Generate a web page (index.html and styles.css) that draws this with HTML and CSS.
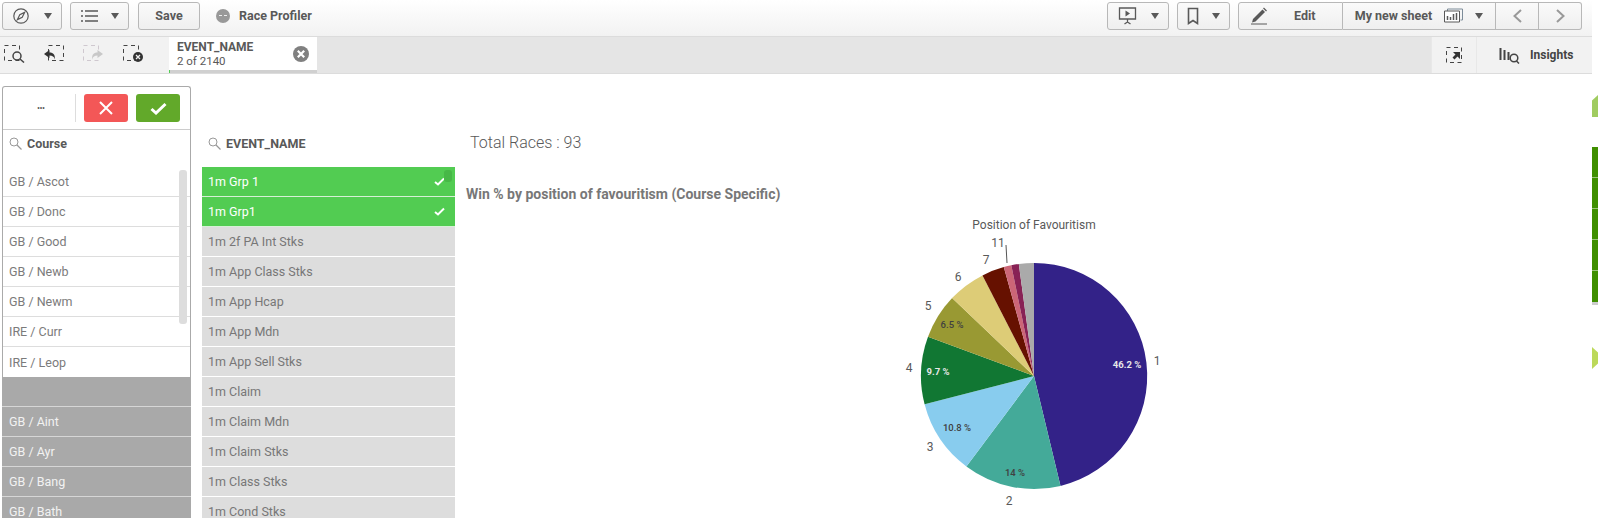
FILE: index.html
```html
<!DOCTYPE html>
<html lang="en">
<head>
    <meta charset="UTF-8">
    <title>Race Profiler</title>
    <link rel="stylesheet" href="styles.css">
</head>
<body>
<div class="app">
    <div class="main">
        <div class="toolbar">
            <button class="btn btn-menu">
                <svg width="18" height="18" viewBox="0 0 18 18"><circle cx="9" cy="9" r="7.2" fill="none" stroke="#595959" stroke-width="1.2"/><path d="M12.6 5.4 10.2 10.2 5.4 12.6 7.8 7.8z" fill="none" stroke="#595959" stroke-width="1.2"/></svg>
                <span class="caret"></span>
            </button>
            <button class="btn btn-menu btn-list">
                <svg width="18" height="14" viewBox="0 0 18 14"><path d="M4 2h13M4 7h13M4 12h13" stroke="#595959" stroke-width="1.5"/><path d="M0 2h2M0 7h2M0 12h2" stroke="#595959" stroke-width="1.5"/></svg>
                <span class="caret"></span>
            </button>
            <button class="btn btn-save">Save</button>
            <span class="app-icon"></span>
            <span class="app-name">Race Profiler</span>

            <div class="toolbar-right">
                <button class="btn btn-menu btn-story">
                    <svg width="19" height="20" viewBox="0 0 19 20"><path d="M1.5 2h16v11h-16z" fill="none" stroke="#595959" stroke-width="1.3"/><path d="M7.5 4.5 12 7.5 7.5 10.5z" fill="#595959"/><path d="M9.5 13v3M6.5 18l3-2 3 2" fill="none" stroke="#595959" stroke-width="1.3"/></svg>
                    <span class="caret"></span>
                </button>
                <button class="btn btn-menu btn-bookmark">
                    <svg width="12" height="18" viewBox="0 0 12 18"><path d="M1.5 1.500h9v15l-4.500-3-4.500 3z" fill="none" stroke="#595959" stroke-width="1.600"/></svg>
                    <span class="caret"></span>
                </button>
                <div class="btn-group">
                    <button class="btn btn-edit">
                        <svg width="18" height="18" viewBox="0 0 18 18"><path d="M3 12 12.500 2.500l2.500 2.500L5.500 14.500 2 15.500z" fill="#595959"/><path d="M13.500 1l3 3" stroke="#595959" stroke-width="1.300"/><path d="M1 17h16" stroke="#595959"/></svg>
                        <span>Edit</span>
                    </button>
                    <button class="btn btn-sheet">
                        <span>My new sheet</span>
                        <svg width="19" height="15" viewBox="0 0 19 15"><path d="M3.500 3V1h15v11h-2" fill="none" stroke="#7d8c99"/><path d="M.5 3h15v11H.500z" fill="#fff" stroke="#595959"/><path d="M3.500 8v4M6.500 9v3M9.500 6v6M12.500 5v7" stroke="#595959" stroke-width="1.500"/></svg>
                        <span class="caret"></span>
                    </button>
                    <button class="btn btn-nav">
                        <svg width="11" height="14" viewBox="0 0 11 14"><path d="M9 1 2.500 7 9 13" fill="none" stroke="#999" stroke-width="2"/></svg>
                    </button>
                    <button class="btn btn-nav">
                        <svg width="11" height="14" viewBox="0 0 11 14"><path d="M2 1l6.500 6L2 13" fill="none" stroke="#999" stroke-width="2"/></svg>
                    </button>
                </div>
            </div>
        </div>

        <div class="selbar">
            <div class="sel-tools">
                <svg width="21" height="18" viewBox="0 0 21 18"><rect x=".5" y=".5" width="15" height="15" fill="none" stroke="#444" stroke-dasharray="4 3.500"/><circle cx="13" cy="11" r="4" fill="#f2f2f2" stroke="#444" stroke-width="1.500"/><path d="M16 14l4 3.500" stroke="#444" stroke-width="1.500"/></svg>
                <svg width="21" height="18" viewBox="0 0 21 18"><rect x="4.500" y=".5" width="15" height="15" fill="none" stroke="#444" stroke-dasharray="4 3.500"/><path d="M0 9l5.500-4v2.500c4 0 5.500 2 5.500 7-1-3-2.500-4-5.500-4v2.500z" fill="#333"/></svg>
                <svg width="21" height="18" viewBox="0 0 21 18"><rect x=".5" y=".5" width="15" height="15" fill="none" stroke="#cfc8cf" stroke-dasharray="4 3.500"/><path d="M20 9l-5.500-4v2.500c-4 0-5.500 2-5.500 7 1-3 2.500-4 5.500-4v2.500z" fill="#c8c8c8"/></svg>
                <svg width="21" height="18" viewBox="0 0 21 18"><rect x=".5" y=".5" width="15" height="15" fill="none" stroke="#444" stroke-dasharray="4 3.500"/><circle cx="15" cy="12" r="5" fill="#333"/><path d="M13 10l4 4M17 10l-4 4" stroke="#f2f2f2" stroke-width="1.300"/></svg>
            </div>
            <div class="chip">
                <div class="chip-body">
                    <div class="chip-text">
                        <div class="chip-field">EVENT_NAME</div>
                        <div class="chip-count">2 of 2140</div>
                    </div>
                    <svg width="16" height="16" viewBox="0 0 16 16"><circle cx="8" cy="8" r="8" fill="#808080"/><path d="M4.800 4.800l6.400 6.400M11.200 4.800l-6.400 6.400" stroke="#fff" stroke-width="2.200"/></svg>
                </div>
                <div class="chip-strip"><span class="chip-strip-on"></span></div>
            </div>
            <div class="sel-fill"></div>
            <div class="sel-side sel-select">
                <svg width="17" height="17" viewBox="0 0 17 17"><rect x=".5" y=".5" width="15" height="15" fill="none" stroke="#444" stroke-dasharray="4 3.500"/><path d="M7 5h7v7l-2.500-2.500-3 3-2-2 3-3z" fill="#333"/></svg>
            </div>
            <div class="sel-side sel-insights">
                <svg width="21" height="17" viewBox="0 0 21 17"><path d="M1.500 1v12M5.500 3v10M9.500 5v8" stroke="#444" stroke-width="2"/><circle cx="15" cy="11" r="3.800" fill="none" stroke="#444" stroke-width="1.500"/><path d="M17.500 14l2.500 2.500" stroke="#444" stroke-width="1.500"/></svg>
                <span>Insights</span>
            </div>
        </div>

        <div class="sheet">
            <div class="course-col">
                <div class="course-panel">
                    <div class="confirm-bar">
                        <span class="more">•••</span>
                        <span class="confirm-sep"></span>
                        <span class="confirm confirm-no">
                            <svg width="14" height="14" viewBox="0 0 14 14"><path d="M1 1l12 12M13 1 1 13" stroke="#fff" stroke-width="2"/></svg>
                        </span>
                        <span class="confirm confirm-yes">
                            <svg width="17" height="13" viewBox="0 0 17 13"><path d="M1.500 7l4.500 4L15.500 2" fill="none" stroke="#fff" stroke-width="3"/></svg>
                        </span>
                    </div>
                    <div class="list-head">
                        <svg class="search" width="13" height="13" viewBox="0 0 13 13"><circle cx="5" cy="5" r="4" fill="none" stroke="#999"/><path d="M8 8l4.500 4.500" stroke="#999" stroke-width="1.300"/></svg>
                        <span>Course</span>
                    </div>
                    <div class="course-white">
                        <div class="row">GB / Ascot</div>
                        <div class="row">GB / Donc</div>
                        <div class="row">GB / Good</div>
                        <div class="row">GB / Newb</div>
                        <div class="row">GB / Newm</div>
                        <div class="row">IRE / Curr</div>
                        <div class="row row-last">IRE / Leop</div>
                        <span class="scrollbar"></span>
                    </div>
                </div>
                <div class="row row-dark"></div>
                <div class="row row-dark">GB / Aint</div>
                <div class="row row-dark">GB / Ayr</div>
                <div class="row row-dark">GB / Bang</div>
                <div class="row row-dark">GB / Bath</div>
            </div>

            <div class="event-col">
                <div class="list-head">
                    <svg class="search" width="13" height="13" viewBox="0 0 13 13"><circle cx="5" cy="5" r="4" fill="none" stroke="#999"/><path d="M8 8l4.500 4.500" stroke="#999" stroke-width="1.300"/></svg>
                    <span>EVENT_NAME</span>
                </div>
                <div class="event-list">
                    <div class="row row-on">1m Grp 1
                        <svg width="11" height="9" viewBox="0 0 11 9"><path d="M1 5l3 2.500L10 1.500" fill="none" stroke="#fff" stroke-width="2"/></svg>
                    </div>
                    <div class="row row-on">1m Grp1
                        <svg width="11" height="9" viewBox="0 0 11 9"><path d="M1 5l3 2.500L10 1.500" fill="none" stroke="#fff" stroke-width="2"/></svg>
                    </div>
                    <div class="row row-alt">1m 2f PA Int Stks</div>
                    <div class="row row-alt">1m App Class Stks</div>
                    <div class="row row-alt">1m App Hcap</div>
                    <div class="row row-alt">1m App Mdn</div>
                    <div class="row row-alt">1m App Sell Stks</div>
                    <div class="row row-alt">1m Claim</div>
                    <div class="row row-alt">1m Claim Mdn</div>
                    <div class="row row-alt">1m Claim Stks</div>
                    <div class="row row-alt">1m Class Stks</div>
                    <div class="row row-alt">1m Cond Stks</div>
                    <span class="scrollbar scrollbar-on"></span>
                </div>
            </div>

            <div class="chart-col">
                <div class="kpi">Total Races : 93</div>
                <h2 class="chart-title">Win % by position of favouritism (Course Specific)</h2>
                <svg class="pie" width="300" height="300" viewBox="-144 -168 300 300">
                    <text class="pie-head" x="0" y="-147">Position of Favouritism</text>
                    <g transform="translate(0 0)">
                        <path d="M0 0V-113A113 113 0 0 1 26.500 109.900Z" fill="#332288"/>
                        <path d="M0 0L26.500 109.900A113 113 0 0 1 -67.600 90.500Z" fill="#44aa99"/>
                        <path d="M0 0L-67.600 90.500A113 113 0 0 1 -109.400 28.300Z" fill="#88ccee"/>
                        <path d="M0 0L-109.400 28.300A113 113 0 0 1 -106 -39.200Z" fill="#117733"/>
                        <path d="M0 0L-106 -39.200A113 113 0 0 1 -81.900 -77.900Z" fill="#999933"/>
                        <path d="M0 0L-81.900 -77.900A113 113 0 0 1 -51.500 -100.600Z" fill="#ddcc77"/>
                        <path d="M0 0L-51.500 -100.600A113 113 0 0 1 -30.200 -108.900Z" fill="#661100"/>
                        <path d="M0 0L-30.200 -108.900A113 113 0 0 1 -22.700 -110.700Z" fill="#cc6677"/>
                        <path d="M0 0L-22.700 -110.700A113 113 0 0 1 -15.200 -112Z" fill="#882255"/>
                        <path d="M0 0L-15.200 -112A113 113 0 0 1 0 -113Z" fill="#aaaaaa"/>
                    </g>
                    <path d="M-28 -131 -27 -113" stroke="#555" fill="none"/>
                    <text class="pie-label" x="123" y="-11">1</text>
                    <text class="pie-label" x="-25" y="129">2</text>
                    <text class="pie-label" x="-104" y="75">3</text>
                    <text class="pie-label" x="-125" y="-4">4</text>
                    <text class="pie-label" x="-106" y="-66">5</text>
                    <text class="pie-label" x="-76" y="-95">6</text>
                    <text class="pie-label" x="-48" y="-112">7</text>
                    <text class="pie-label" x="-36" y="-129">11</text>
                    <text class="pie-val pie-val-light" x="93" y="-8">46.2 %</text>
                    <text class="pie-val" x="-19" y="100">14 %</text>
                    <text class="pie-val" x="-77" y="55">10.8 %</text>
                    <text class="pie-val pie-val-light" x="-96" y="-1">9.7 %</text>
                    <text class="pie-val" x="-82" y="-48">6.5 %</text>
                </svg>
            </div>
        </div>
    </div>

    <div class="edge">
        <span class="hex hex-a"></span>
        <div class="edge-bars">
            <span></span><span></span><span></span><span></span><span></span>
        </div>
        <span class="hex hex-b"></span>
    </div>
</div>
</body>
</html>
```

FILE: styles.css
```css
html, body {
    margin: 0;
    height: 518px;
    overflow: hidden;
    background: #fff;
}
body {
    font-family: "Roboto", "Liberation Sans", sans-serif;
    font-size: 12px;
    color: #595959;
}
.app {
    display: flex;
    height: 518px;
}
.main {
    width: 1592px;
    flex: none;
}

/* top toolbar */
.toolbar {
    display: flex;
    align-items: center;
    height: 37px;
    padding: 2px 10px 7px 2px;
    box-sizing: border-box;
    background: linear-gradient(#fff, #f2f2f2);
    border-bottom: 1px solid #dcdcdc;
}
.btn {
    display: flex;
    align-items: center;
    justify-content: center;
    height: 28px;
    padding: 0;
    box-sizing: border-box;
    font: 700 12.500px "Roboto", sans-serif;
    color: #595959;
    background: linear-gradient(#fafafa, #efefef);
    border: 1px solid #b8b8b8;
    border-radius: 3px;
}
.btn-menu {
    width: 60px;
    gap: 14px;
    margin-right: 8px;
}
.btn-list {
    width: 59px;
    gap: 12px;
    margin-right: 9px;
}
.btn-save {
    width: 62px;
}
.caret {
    width: 0;
    height: 0;
    border-left: 4.500px solid transparent;
    border-right: 4.500px solid transparent;
    border-top: 6px solid #595959;
}
.app-icon {
    position: relative;
    width: 14px;
    height: 14px;
    margin-left: 16px;
    border-radius: 50%;
    background: #999;
}
.app-icon::after {
    content: "";
    position: absolute;
    left: 3px;
    right: 3px;
    top: 6px;
    border-top: 1.500px dashed #eee;
}
.app-name {
    margin-left: 9px;
    font-weight: 700;
    font-size: 12.500px;
}
.toolbar-right {
    display: flex;
    margin-left: auto;
}
.btn-story {
    width: 62px;
}
.btn-bookmark {
    width: 53px;
    gap: 13px;
}
.btn-group {
    display: flex;
}
.btn-group .btn {
    border-radius: 0;
    border-left-width: 0;
}
.btn-group .btn:first-child {
    border-left-width: 1px;
    border-radius: 3px 0 0 3px;
}
.btn-group .btn:last-child {
    border-radius: 0 3px 3px 0;
}
.btn-edit {
    width: 105px;
    justify-content: flex-start;
    padding-left: 11px;
    gap: 26px;
}
.btn-sheet {
    width: 153px;
    gap: 12px;
}
.btn-nav {
    width: 43px;
}

/* selections bar */
.selbar {
    display: flex;
    height: 37px;
    box-sizing: border-box;
    background: #e5e5e5;
    border-bottom: 1px solid #dcdcdc;
}
.sel-tools {
    width: 169px;
    flex: none;
    display: flex;
    align-items: center;
    justify-content: space-between;
    padding: 0 25px 2px 4px;
    box-sizing: border-box;
    background: #f2f2f2;
}
.chip {
    width: 148px;
    flex: none;
    display: flex;
    flex-direction: column;
    background: #fff;
}
.chip-body {
    flex: 1;
    display: flex;
    align-items: center;
    justify-content: space-between;
    padding: 0 8px 0 8px;
}
.chip-field {
    font-weight: 700;
    line-height: 14px;
}
.chip-count {
    font-size: 11.500px;
    line-height: 14px;
}
.chip-strip {
    height: 3px;
    background: #d0d0d0;
}
.chip-strip-on {
    display: block;
    width: 1px;
    height: 3px;
    background: #52cc52;
}
.sel-fill {
    flex: 1;
}
.sel-side {
    display: flex;
    align-items: center;
    background: #f2f2f2;
    border-left: 1px solid #e8e8e8;
    box-sizing: border-box;
}
.sel-select {
    width: 45px;
    justify-content: center;
}
.sel-insights {
    width: 116px;
    padding-left: 22px;
    gap: 10px;
    font-weight: 700;
    color: #444;
}

/* sheet */
.sheet {
    display: flex;
    height: 444px;
    overflow: hidden;
}
.course-col {
    width: 189px;
    margin-left: 2px;
    padding-top: 12px;
    flex: none;
}
.course-panel {
    border: solid #aaa;
    border-width: 1px 1.500px 0;
    border-radius: 3px 3px 0 0;
}
.confirm-bar {
    display: flex;
    align-items: center;
    height: 42px;
    padding-left: 34px;
    border-bottom: 1px solid #ccc;
}
.more {
    width: 38px;
    font-size: 9px;
    letter-spacing: -.5px;
}
.confirm-sep {
    width: 1px;
    height: 28px;
    background: #ddd;
}
.confirm {
    display: flex;
    align-items: center;
    justify-content: center;
    width: 44px;
    height: 28px;
    margin-left: 8px;
    border-radius: 3px;
}
.confirm-no {
    background: #f35757;
}
.confirm-yes {
    background: #62a92a;
}
.list-head {
    display: flex;
    align-items: center;
    gap: 5px;
    height: 37px;
    padding: 0 0 10px 6px;
    box-sizing: border-box;
    font-weight: 700;
    font-size: 12.500px;
}
.course-white {
    position: relative;
}
.row {
    display: flex;
    align-items: center;
    height: 30px;
    padding-left: 6px;
    box-sizing: border-box;
    font-size: 12.500px;
    color: #7b7b7b;
    border-bottom: 1px solid #ddd;
}
.row-last {
    border-bottom: 0;
}
.row-dark {
    padding-left: 7px;
    color: #f2f2f2;
    background: #a9a9a9;
    border-bottom-color: #d6d6d6;
}
.row-alt {
    color: #777;
    background: #ddd;
    border-bottom-color: #fff;
}
.row-on {
    justify-content: space-between;
    padding-right: 10px;
    color: #fff;
    background: #52cc52;
    border-bottom-color: #d6f0d6;
}
.scrollbar {
    position: absolute;
    top: 3px;
    right: 3px;
    width: 8px;
    height: 154px;
    border-radius: 3px;
    background: #ddd;
}
.scrollbar-on {
    height: 12px;
    background: #47b847;
}
.event-col {
    width: 253px;
    margin-left: 11px;
    padding-top: 56px;
    flex: none;
}
.event-list {
    position: relative;
}
.event-col .row {
    padding-left: 6px;
}
.chart-col {
    flex: 1;
    padding-left: 11px;
}
.kpi {
    margin-top: 57px;
    padding-left: 4px;
    font-size: 16px;
    font-weight: 300;
    line-height: 24px;
}
.chart-title {
    margin: 30px 0 0;
    font-size: 14px;
    font-weight: 700;
    line-height: 18px;
    color: #777;
}
.pie {
    display: block;
    margin: 5px 0 0 424px;
}
.pie-head {
    font-size: 12px;
    fill: #595959;
    text-anchor: middle;
}
.pie-label {
    font-size: 12px;
    fill: #595959;
    text-anchor: middle;
}
.pie-val {
    font-size: 9.500px;
    font-weight: 500;
    fill: #404040;
    text-anchor: middle;
}
.pie-val-light {
    fill: #e8e8e8;
    font-weight: 700;
}

/* bit of the next object cut off at the window edge */
.edge {
    flex: 1;
    padding-top: 95px;
}
.hex {
    display: block;
    height: 22px;
    clip-path: polygon(0 25%, 100% 0, 100% 100%, 0 100%);
}
.hex-a {
    background: #a0cc60;
}
.hex-b {
    margin-top: 42px;
    background: #bcd95a;
    clip-path: polygon(0 0, 100% 25%, 100% 75%, 0 100%);
}
.hex-a {
    clip-path: polygon(100% 0, 100% 100%, 0 100%, 0 25%);
}
.edge-bars {
    margin-top: 30px;
    border-bottom: 3px solid #ccc;
}
.edge-bars span {
    display: block;
    height: 31px;
    box-sizing: border-box;
    background: #3f8f00;
    border-bottom: 1px solid #9cc47a;
}
.edge-bars span:last-child {
    border-bottom: 0;
}
```
